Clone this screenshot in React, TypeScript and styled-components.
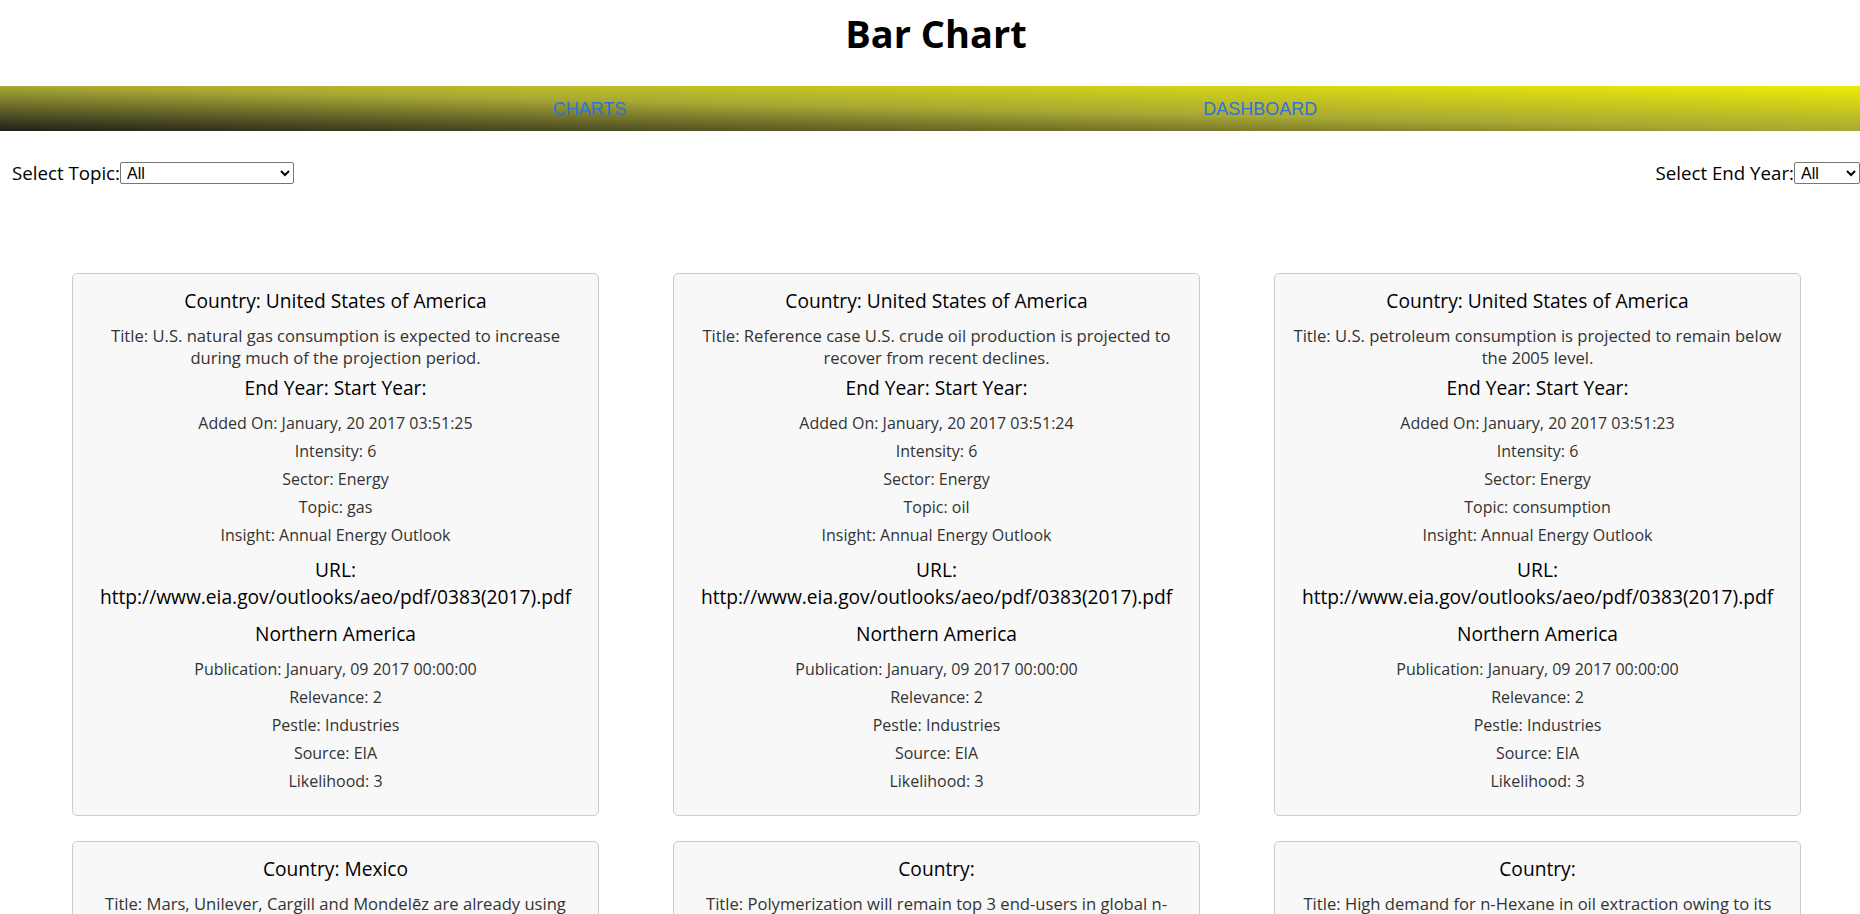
import React from "react";
import styled, { createGlobalStyle } from "styled-components";

const GlobalStyle = createGlobalStyle`
  html, body { margin: 0; padding: 0; background: #ffffff; }
  body { font-family: "Open Sans", "Noto Sans", sans-serif; color: #000; }
`;

const Page = styled.div`
  width: 1860px;
  min-height: 914px;
`;

const Title = styled.h1`
  margin: 0;
  padding: 9px 0 29px 12px;
  font-family: "Open Sans", "Noto Sans", sans-serif;
  font-size: 38px;
  font-weight: 700;
  line-height: 48px;
  text-align: center;
  color: #000;
`;

const Nav = styled.nav`
  height: 45px;
  display: flex;
  align-items: center;
  justify-content: center;
  gap: 577px;
  padding-left: 10px;
  box-sizing: border-box;
  background: linear-gradient(to top right, #1f1f1c 0%, #a8a834 50%, #ecec06 100%);
`;

const NavLink = styled.a`
  font-family: "Liberation Sans", Arial, sans-serif;
  font-size: 18px;
  line-height: 20px;
  color: #2f72d6;
  text-decoration: none;
  text-transform: uppercase;
`;

const FilterRow = styled.div`
  display: flex;
  justify-content: space-between;
  align-items: center;
  padding: 31px 0 0 12px;
`;

const Filter = styled.label`
  display: flex;
  align-items: center;
  font-family: "Open Sans", "Noto Sans", sans-serif;
  font-size: 18.7px;
  line-height: 22px;
  color: #000;
`;

const Select = styled.select<{ $w: number }>`
  width: ${(p) => p.$w}px;
  height: 22px;
  box-sizing: border-box;
  font-family: "Liberation Sans", Arial, sans-serif;
  font-size: 16px;
  color: #000;
  background: #fff;
  border: 1px solid #767676;
  border-radius: 2px;
  padding: 0 0 0 2px;
`;

const Grid = styled.div`
  display: grid;
  grid-template-columns: repeat(3, 527px);
  column-gap: 74px;
  row-gap: 25px;
  padding: 89px 0 40px 72px;
`;

const Card = styled.div`
  box-sizing: border-box;
  border: 1px solid #cccccc;
  border-radius: 5px;
  background: #f8f8f8;
  padding: 13px 15px 23px;
  display: flex;
  flex-direction: column;
  align-items: center;
  text-align: center;
`;

const Heading = styled.div<{ $mt?: number }>`
  margin-top: ${(p) => p.$mt ?? 0}px;
  font-size: 19.2px;
  line-height: 27px;
  color: #000;
`;

const Url = styled.span`
  display: block;
  white-space: nowrap;
`;

const Text = styled.p<{ $mt?: number }>`
  margin: ${(p) => p.$mt ?? 6}px 0 0;
  font-size: 16px;
  line-height: 22px;
  color: #333;
`;

const TitleText = styled(Text)`
  font-size: 16.6px;
`;

type Item = {
  country: string;
  title: string;
  added: string;
  topic: string;
};

const items: Item[] = [
  {
    country: "United States of America",
    title: "U.S. natural gas consumption is expected to increase during much of the projection period.",
    added: "January, 20 2017 03:51:25",
    topic: "gas",
  },
  {
    country: "United States of America",
    title: "Reference case U.S. crude oil production is projected to recover from recent declines.",
    added: "January, 20 2017 03:51:24",
    topic: "oil",
  },
  {
    country: "United States of America",
    title: "U.S. petroleum consumption is projected to remain below the 2005 level.",
    added: "January, 20 2017 03:51:23",
    topic: "consumption",
  },
  {
    country: "Mexico",
    title: "Mars, Unilever, Cargill and Mondelēz are already using blockchain to track food supply chains.",
    added: "January, 20 2017 03:51:22",
    topic: "food",
  },
  {
    country: "",
    title: "Polymerization will remain top 3 end-users in global n-hexane market.",
    added: "January, 20 2017 03:51:21",
    topic: "market",
  },
  {
    country: "",
    title: "High demand for n-Hexane in oil extraction owing to its low boiling point and high solvency.",
    added: "January, 20 2017 03:51:20",
    topic: "oil",
  },
];

function InfoCard({ item }: { item: Item }) {
  return (
    <Card>
      <Heading>Country: {item.country}</Heading>
      <TitleText $mt={11}>Title: {item.title}</TitleText>
      <Heading $mt={5}>End Year: Start Year:</Heading>
      <Text $mt={11}>Added On: {item.added}</Text>
      <Text>Intensity: 6</Text>
      <Text>Sector: Energy</Text>
      <Text>Topic: {item.topic}</Text>
      <Text>Insight: Annual Energy Outlook</Text>
      <Heading $mt={10}>
        URL:
        <Url>http://www.eia.gov/outlooks/aeo/pdf/0383(2017).pdf</Url>
      </Heading>
      <Heading $mt={10}>Northern America</Heading>
      <Text $mt={11}>Publication: January, 09 2017 00:00:00</Text>
      <Text>Relevance: 2</Text>
      <Text>Pestle: Industries</Text>
      <Text>Source: EIA</Text>
      <Text>Likelihood: 3</Text>
    </Card>
  );
}

export default function App() {
  return (
    <Page>
      <GlobalStyle />
      <Title>Bar Chart</Title>
      <Nav>
        <NavLink href="#charts">Charts</NavLink>
        <NavLink href="#dashboard">Dashboard</NavLink>
      </Nav>
      <FilterRow>
        <Filter>
          Select Topic:
          <Select $w={174} defaultValue="All">
            <option>All</option>
            <option>gas</option>
            <option>oil</option>
            <option>consumption</option>
          </Select>
        </Filter>
        <Filter>
          Select End Year:
          <Select $w={66} defaultValue="All">
            <option>All</option>
            <option>2017</option>
          </Select>
        </Filter>
      </FilterRow>
      <Grid>
        {items.map((it, i) => (
          <InfoCard key={i} item={it} />
        ))}
      </Grid>
    </Page>
  );
}
